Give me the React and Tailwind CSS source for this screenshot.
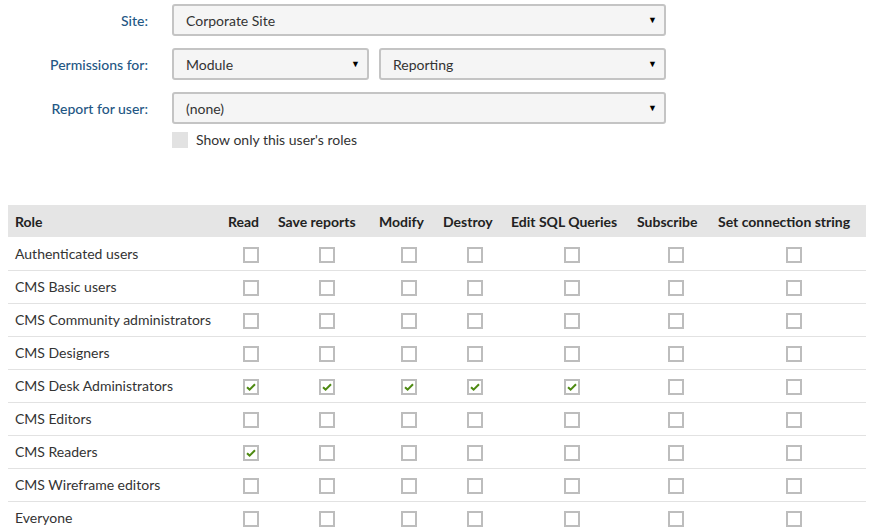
import React from 'react';

const FONT = { fontFamily: 'Lato, "Open Sans", sans-serif' };

const COLUMNS = [
  { key: 'read', label: 'Read', width: 'w-[50px]' },
  { key: 'save', label: 'Save reports', width: 'w-[101px]' },
  { key: 'modify', label: 'Modify', width: 'w-[64px]' },
  { key: 'destroy', label: 'Destroy', width: 'w-[68px]' },
  { key: 'sql', label: 'Edit SQL Queries', width: 'w-[126px]' },
  { key: 'subscribe', label: 'Subscribe', width: 'w-[81px]' },
  { key: 'conn', label: 'Set connection string', width: 'w-[156px]' },
];

// role name + which permission keys are ticked
const ROLES = [
  ['Authenticated users', []],
  ['CMS Basic users', []],
  ['CMS Community administrators', []],
  ['CMS Designers', []],
  ['CMS Desk Administrators', ['read', 'save', 'modify', 'destroy', 'sql']],
  ['CMS Editors', []],
  ['CMS Readers', ['read']],
  ['CMS Wireframe editors', []],
  ['Everyone', []],
];

function Select({ value, className }) {
  return (
    <div
      className={`flex h-[32px] items-center justify-between rounded-[3px] border-2 border-[#c4c4c4] bg-[#f5f5f5] pl-[12px] pr-[7px] text-[14px] text-[#333] ${className}`}
    >
      <span>{value}</span>
      <span className="text-[9px] text-black">▼</span>
    </div>
  );
}

function CheckBox({ checked }) {
  return (
    <span className="inline-flex h-[16px] w-[16px] items-center justify-center border-2 border-[#bdbdbd] bg-white align-middle">
      {checked && (
        <svg width="10" height="8" viewBox="0 0 10 8">
          <path d="M1 4.2 L3.6 6.6 L9 1.2" fill="none" stroke="#4e8a12" strokeWidth="2" />
        </svg>
      )}
    </span>
  );
}

function FormRow({ label, children }) {
  return (
    <div className="flex items-center gap-[24px]">
      <div className="w-[148px] text-right text-[14px] font-medium text-[#245784]">{label}</div>
      {children}
    </div>
  );
}

export default function App() {
  return (
    <div className="h-[528px] w-[870px] overflow-hidden bg-white pt-[4px]" style={FONT}>
      <div className="flex flex-col gap-[12px]">
        <FormRow label="Site:">
          <Select value="Corporate Site" className="w-[494px]" />
        </FormRow>
        <FormRow label="Permissions for:">
          <div className="flex gap-[10px]">
            <Select value="Module" className="w-[197px]" />
            <Select value="Reporting" className="w-[287px]" />
          </div>
        </FormRow>
        <FormRow label="Report for user:">
          <Select value="(none)" className="w-[494px]" />
        </FormRow>
      </div>
      <div className="mt-[5px] flex items-center gap-[8px] pl-[172px] text-[14px] text-[#333]">
        <span className="h-[16px] w-[16px] bg-[#e2e2e2]" />
        <span>Show only this user's roles</span>
      </div>

      <div className="mt-[55px] px-[8px]">
        <table className="w-[858px] table-fixed border-collapse text-[14px] text-[#333]">
          <colgroup>
            <col className="w-[212px]" />
            {COLUMNS.map((c) => (
              <col key={c.key} className={c.width} />
            ))}
          </colgroup>
          <thead>
            <tr className="h-[32px] bg-[#e5e5e5] text-[#222]">
              <th className="pl-[7px] text-left font-bold">Role</th>
              {COLUMNS.map((c) => (
                <th key={c.key} className="whitespace-nowrap px-[8px] text-left font-bold">
                  {c.label}
                </th>
              ))}
            </tr>
          </thead>
          <tbody>
            {ROLES.map(([name, perms]) => (
              <tr key={name} className="h-[33px] border-b border-[#e2e2e2]">
                <td className="pl-[7px]">{name}</td>
                {COLUMNS.map((c) => (
                  <td key={c.key} className="pl-[12px] text-center">
                    <CheckBox checked={perms.includes(c.key)} />
                  </td>
                ))}
              </tr>
            ))}
          </tbody>
        </table>
      </div>
    </div>
  );
}
